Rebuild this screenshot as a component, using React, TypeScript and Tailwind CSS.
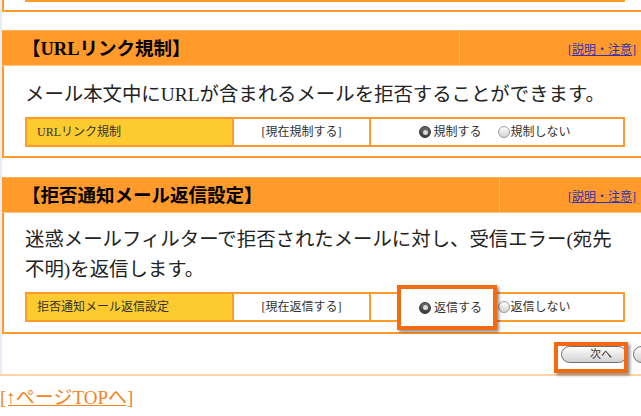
import type { ReactNode } from "react";

function Radio({ checked }: { checked?: boolean }) {
  if (checked) {
    return (
      <span className="flex h-3 w-3 shrink-0 items-center justify-center rounded-full border border-[#333] bg-linear-to-b from-[#6e6e6e] to-[#3a3a3a]">
        <span className="h-[5px] w-[5px] rounded-full bg-[#d9d9d9]" />
      </span>
    );
  }
  return <span className="block h-3 w-3 shrink-0 rounded-full border border-[#9b9b9b] bg-linear-to-b from-white to-[#d4d4d4]" />;
}

type SectionProps = {
  title: string;
  titleCls: string;
  text: ReactNode;
  bodyCls: string;
  label: string;
  current: string;
  on: string;
  off: string;
};

const Section = ({ title, titleCls, text, bodyCls, label, current, on, off }: SectionProps) => {
  return (
    <div>
      <div className="flex h-[36px] w-[646px] border-t border-b border-t-[#ffb255] border-b-[#ffc47f] bg-[#ff9a2b]">
        <div className={`${titleCls} flex items-center border-r border-[#ffb866] pl-[20px] pt-[4px] text-[18.5px] font-bold text-black`}>
          {title}
        </div>
        <div className="flex flex-1 items-center justify-end pr-[12px] pt-[3px]">
          <a className="text-[12px] text-[#3232b8] underline">[説明・注意]</a>
        </div>
      </div>
      <div className={`${bodyCls} w-[646px] border-x-2 border-b-2 border-[#ff9a2b] bg-white pl-[21px]`}>
        <p className="text-[19.4px] leading-[30px] text-[#222]">{text}</p>
        <div className="mt-[7px] flex h-[30px] w-[600px] border-2 border-[#ff9a2b] text-[12px] text-[#333]">
          <div className="flex w-[205px] items-center bg-[#fdca2f] pl-[10px]">{label}</div>
          <div className="flex w-[137px] items-center justify-center border-l-2 border-[#ff9a2b]">
            {current}
          </div>
          <div className="flex flex-1 items-center justify-center border-l-2 border-[#ff9a2b] pr-[4px]">
            <Radio checked />
            <span className="ml-[2px]">{on}</span>
            <span className="ml-[16px] flex"><Radio /></span>
            <span className="ml-[1px]">{off}</span>
          </div>
        </div>
      </div>
    </div>
  );
};

export default function App() {
  return (
    <div className="relative h-[416px] w-[641px] overflow-hidden bg-white font-['Liberation_Serif','Noto_Sans_CJK_JP',serif]">
      <div className="border-l-2 border-[#e6edf6] pb-[11px]">
        <div className="h-[12px] w-[646px] border-b-2 border-l-2 border-[#ff9a2b] pl-[21px]">
          <div className="h-[2px] w-[600px] bg-[#ff9a2b]" />
        </div>

        <div className="mt-[18px]">
          <Section
            title="【URLリンク規制】"
            titleCls="w-[458px]"
            bodyCls="pt-[14px] pb-[9px]"
            text="メール本文中にURLが含まれるメールを拒否することができます。"
            label="URLリンク規制"
            current="[現在規制する]"
            on="規制する"
            off="規制しない"
          />
        </div>

        <div className="mt-[19px]">
          <Section
            title="【拒否通知メール返信設定】"
            titleCls="w-[498px]"
            bodyCls="pt-[12px] pb-[10px]"
            text={
              <>
                迷惑メールフィルターで拒否されたメールに対し、受信エラー(宛先
                <br />
                不明)を返信します。
              </>
            }
            label="拒否通知メール返信設定"
            current="[現在返信する]"
            on="返信する"
            off="返信しない"
          />
        </div>

        <div className="mt-[12px] flex gap-[6px] pl-[559px]">
          <div className="flex h-[17px] w-[66px] shrink-0 items-center justify-center rounded-full border border-[#6f6f6f] bg-linear-to-b from-white to-[#d2d2d2] pl-[14px] text-[11px] text-[#333]">
            次へ
          </div>
          <div className="h-[17px] w-[66px] shrink-0 rounded-full border border-[#6f6f6f] bg-linear-to-b from-white to-[#d2d2d2]" />
        </div>
      </div>

      <div className="h-[2px] w-full bg-[#ffd5a8]" />

      <a className="mt-[9px] block text-[19px] leading-[25px] text-[#f5841f] underline">[↑ページTOPへ]</a>

      {/* annotation boxes */}
      <div className="absolute left-[397px] top-[285px] flex h-[45px] w-[100px] items-center border-4 border-[#f26b10] bg-white pl-[18px] text-[12px] text-[#333] shadow-[2px_2px_3px_rgba(0,0,0,0.45)]">
        <Radio checked />
        <span className="ml-[3px]">返信する</span>
      </div>
      <div className="absolute left-[554px] top-[342px] h-[31px] w-[74px] border-4 border-[#f26b10] shadow-[2px_2px_3px_rgba(0,0,0,0.45)]" />
    </div>
  );
}
